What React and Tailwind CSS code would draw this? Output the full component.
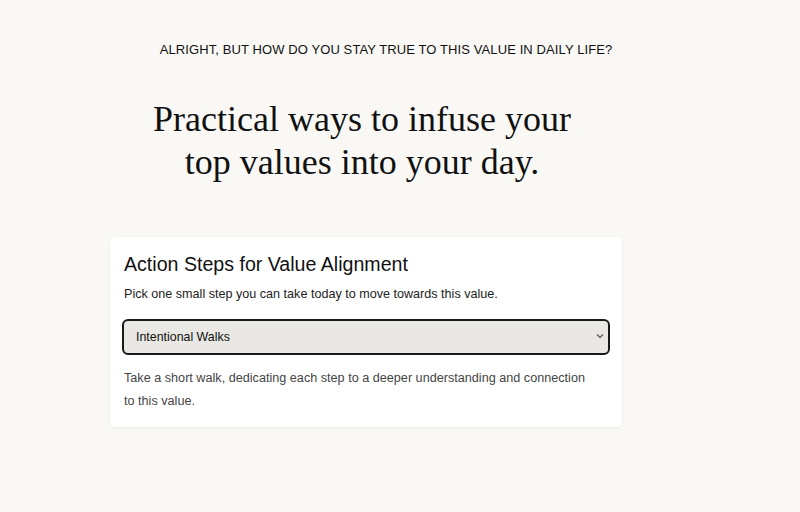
import React from 'react';

export default function App() {
  return (
    <div className="min-h-[512px] w-full bg-[#faf8f5] text-black" style={{ fontFamily: '"Liberation Sans", Arial, sans-serif' }}>
      <div className="flex w-[732px] flex-col items-center pt-[42px]">
        <p className="ml-[40px] text-[13px] leading-[16px] tracking-[0.1px] text-[#111]">
          ALRIGHT, BUT HOW DO YOU STAY TRUE TO THIS VALUE IN DAILY LIFE?
        </p>
        <h1
          className="mr-[8px] mt-[40px] text-center text-[36px] leading-[43px] text-[#111]"
          style={{ fontFamily: '"Liberation Serif", Georgia, serif' }}
        >
          Practical ways to infuse your
          <br />
          top values into your day.
        </h1>

        {/* Card */}
        <div className="mt-[53px] w-[512px] rounded-[4px] bg-white px-[12px] pb-[14px] pt-[14px] shadow-[0_1px_3px_rgba(0,0,0,0.06)]">
          <h2 className="pl-[2px] text-[19.6px] leading-[26px] text-[#111]">Action Steps for Value Alignment</h2>
          <p className="mt-[8px] pl-[2px] text-[12.6px] leading-[18px] text-[#222]">
            Pick one small step you can take today to move towards this value.
          </p>
          <div className="relative mt-[16px]">
            <select className="h-[36px] w-full appearance-none rounded-[6px] border-2 border-[#1a1a1a] bg-[#eae8e4] pl-[12px] text-[12.4px] text-[#111] outline-none">
              <option>Intentional Walks</option>
            </select>
            <svg
              className="pointer-events-none absolute right-[6px] top-[14px]"
              width="8"
              height="6"
              viewBox="0 0 8 6"
              fill="none"
              stroke="#555"
              strokeWidth="1.2"
            >
              <path d="M1 1.5 L4 4.5 L7 1.5" />
            </svg>
          </div>
          <p className="mt-[12px] pl-[2px] pr-[14px] text-[12.65px] leading-[23px] text-[#444]">
            Take a short walk, dedicating each step to a deeper understanding and connection to this value.
          </p>
        </div>
      </div>
    </div>
  );
}
